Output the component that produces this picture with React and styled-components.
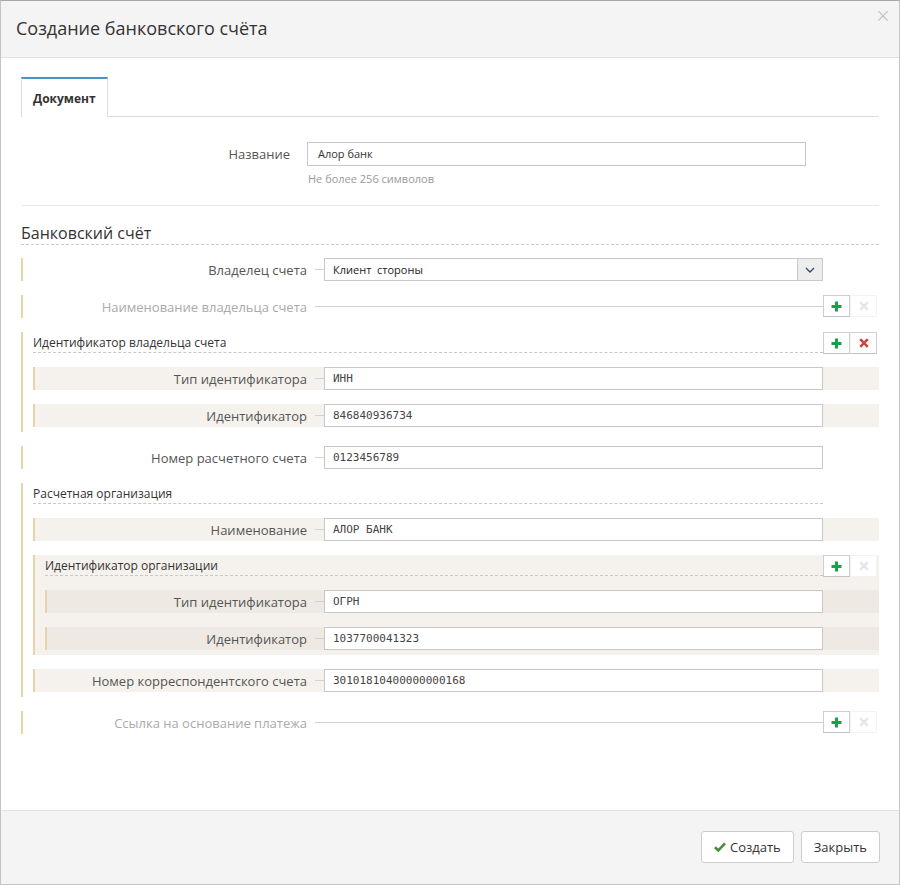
import React from "react";
import styled, { createGlobalStyle } from "styled-components";

const GOLD = "#e8d4a8";
const BEIGE = "#f5f2ed";
const BEIGE_DARK = "#eeeae3";

const GlobalStyle = createGlobalStyle`
  html, body {
    margin: 0;
    padding: 0;
    background: #fff;
  }
  body {
    font-family: "Open Sans", "Noto Sans", sans-serif;
    color: #333;
  }
  * {
    box-sizing: border-box;
  }
`;

// Icons
const PlusIcon = () => (
  <svg width="11" height="11" viewBox="0 0 11 11">
    <path d="M5.5 0.5V10.5M0.5 5.5H10.5" stroke="#17a24a" strokeWidth="3" />
  </svg>
);

const TimesIcon = ({ color }) => (
  <svg width="10" height="10" viewBox="0 0 10 10">
    <path d="M1.2 1.2L8.8 8.8M8.8 1.2L1.2 8.8" stroke={color} strokeWidth="2.6" />
  </svg>
);

const CheckIcon = () => (
  <svg width="12" height="10" viewBox="0 0 12 10">
    <path d="M1 5.2L4.3 8.4L11 1.4" stroke="#4a8a3c" strokeWidth="2.6" fill="none" />
  </svg>
);

const ChevronIcon = () => (
  <svg width="10" height="6" viewBox="0 0 10 6">
    <path d="M1 1L5 5L9 1" stroke="#34466b" strokeWidth="1.3" fill="none" />
  </svg>
);

const App = () => {
  return (
    <>
      <GlobalStyle />
      <Modal>
        <Header>
          <Title>Создание банковского счёта</Title>
          <Close>×</Close>
        </Header>
        <Body>
          <TabBar>
            <Tab>Документ</Tab>
          </TabBar>

          <NameGrid>
            <NameLabel>Название</NameLabel>
            <NameInput>Алор банк</NameInput>
            <span />
            <span />
            <Hint>Не более 256 символов</Hint>
          </NameGrid>

          <Separator />

          <SectionHeading>Банковский счёт</SectionHeading>

          <FieldList>
            <Field label="Владелец счета" select value="Клиент  стороны" />
            <EmptyField label="Наименование владельца счета" />

            <Group>
              <GroupHeader title="Идентификатор владельца счета" actions removable />
              <Field label="Тип идентификатора" value="ИНН" bg={BEIGE} />
              <Field label="Идентификатор" value="846840936734" bg={BEIGE} />
            </Group>

            <Field label="Номер расчетного счета" value="0123456789" />

            <Group>
              <GroupHeader title="Расчетная организация" />
              <Field label="Наименование" value="АЛОР БАНК" bg={BEIGE} />
              <Group $bg={BEIGE}>
                <GroupHeader title="Идентификатор организации" actions />
                <Field label="Тип идентификатора" value="ОГРН" bg={BEIGE_DARK} />
                <Field label="Идентификатор" value="1037700041323" bg={BEIGE_DARK} />
              </Group>
              <Field
                label="Номер корреспондентского счета"
                value="30101810400000000168"
                bg={BEIGE}
              />
            </Group>

            <EmptyField label="Ссылка на основание платежа" />
          </FieldList>
        </Body>
        <Footer>
          <FooterButton>
            <CheckIcon />
            Создать
          </FooterButton>
          <FooterButton>Закрыть</FooterButton>
        </Footer>
      </Modal>
    </>
  );
};

const Field = ({ label, value, select, bg }) => (
  <Row $bg={bg}>
    <FieldLabel>{label}</FieldLabel>
    <Connector />
    {select ? (
      <SelectBox>
        <SelectValue>{value}</SelectValue>
        <SelectArrow>
          <ChevronIcon />
        </SelectArrow>
      </SelectBox>
    ) : (
      <Control>{value}</Control>
    )}
    <Gutter />
  </Row>
);

const EmptyField = ({ label }) => (
  <Row>
    <FieldLabel $muted>{label}</FieldLabel>
    <Connector $stretch />
    <Gutter>
      <Actions />
    </Gutter>
  </Row>
);

const Actions = ({ removable }) => (
  <ActionGroup>
    <ActionButton>
      <PlusIcon />
    </ActionButton>
    <ActionButton $disabled={!removable}>
      <TimesIcon color={removable ? "#c9483d" : "#e6e6e6"} />
    </ActionButton>
  </ActionGroup>
);

const GroupHeader = ({ title, actions, removable }) => (
  <HeaderRow>
    <GroupTitle>{title}</GroupTitle>
    <Gutter>{actions && <Actions removable={removable} />}</Gutter>
  </HeaderRow>
);

// Styled Components
const Modal = styled.div`
  width: 900px;
  height: 885px;
  display: flex;
  flex-direction: column;
  border: 1px solid #c4c4c4;
  border-top-color: #a8a8a8;
  background: #fff;
`;

const Header = styled.div`
  height: 57px;
  display: flex;
  justify-content: space-between;
  padding: 0 8px 0 15px;
  background: #f4f4f4;
  border-bottom: 1px solid #e2e2e2;
`;

const Title = styled.h1`
  align-self: center;
  margin: 0 0 2px;
  font-size: 18px;
  font-weight: 400;
  color: #333;
`;

const Close = styled.span`
  margin-top: 3px;
  font-size: 19px;
  line-height: 22px;
  color: #bdbdbd;
  font-family: "DejaVu Sans", sans-serif;
  font-weight: 300;
`;

const Body = styled.div`
  flex: 1;
  padding: 19px 20px 0;
`;

const TabBar = styled.div`
  height: 40px;
  display: flex;
  border-bottom: 1px solid #ddd;
`;

const Tab = styled.div`
  height: 40px;
  padding: 0 11px;
  display: flex;
  align-items: center;
  font-size: 12px;
  font-weight: 700;
  color: #333;
  background: #fff;
  border: 1px solid #ddd;
  border-top: 2px solid #4a94c4;
  border-bottom: none;
`;

const NameGrid = styled.div`
  display: grid;
  grid-template-columns: 1fr 499px 73px;
  align-items: center;
  margin-top: 25px;
`;

const NameLabel = styled.div`
  padding-right: 17px;
  text-align: right;
  font-size: 13px;
  color: #555;
`;

const NameInput = styled.div`
  height: 24px;
  line-height: 22px;
  padding: 0 10px;
  border: 1px solid #c8c8c8;
  font-size: 11px;
  color: #333;
`;

const Hint = styled.div`
  margin-top: 5px;
  padding-left: 1px;
  font-size: 11px;
  line-height: 16px;
  color: #999;
`;

const Separator = styled.div`
  margin-top: 18px;
  height: 1px;
  background: #e8e8e8;
`;

const SectionHeading = styled.h2`
  margin: 16px 0 0;
  font-size: 16px;
  font-weight: 400;
  line-height: 22px;
  color: #333;
  border-bottom: 1px dashed #ccc;
`;

const FieldList = styled.div`
  margin-top: 13px;
  display: flex;
  flex-direction: column;
  gap: 14px;
`;

const Row = styled.div`
  height: 23px;
  display: flex;
  align-items: center;
  border-left: 2px solid ${GOLD};
  background: ${(p) => p.$bg || "transparent"};
`;

const FieldLabel = styled.div`
  flex: 1;
  padding-right: 8px;
  text-align: right;
  font-size: 13px;
  color: ${(p) => (p.$muted ? "#aaa" : "#555")};
  white-space: nowrap;
`;

const Connector = styled.div`
  width: ${(p) => (p.$stretch ? "508px" : "9px")};
  height: 1px;
  background: #d2d2d2;
`;

const Control = styled.div`
  width: 499px;
  height: 23px;
  padding: 0 8px;
  line-height: 21px;
  background: #fff;
  border: 1px solid #c8c8c8;
  font-family: "DejaVu Sans Mono", "Liberation Mono", monospace;
  font-size: 11px;
  color: #444;
  white-space: pre;
`;

const SelectBox = styled.div`
  width: 499px;
  height: 23px;
  display: flex;
  background: #fff;
  border: 1px solid #c8c8c8;
`;

const SelectValue = styled.div`
  flex: 1;
  padding: 0 8px;
  line-height: 21px;
  font-size: 11px;
  color: #222;
  white-space: pre;
`;

const SelectArrow = styled.div`
  width: 25px;
  display: flex;
  align-items: center;
  justify-content: center;
  background: #ededed;
  border-left: 1px solid #c8c8c8;
`;

const Gutter = styled.div`
  width: 56px;
  height: 100%;
  display: flex;
  align-items: flex-start;
`;

const ActionGroup = styled.div`
  display: flex;
`;

const ActionButton = styled.div`
  width: 27px;
  height: 22px;
  display: flex;
  align-items: center;
  justify-content: center;
  background: #fff;
  border: 1px solid ${(p) => (p.$disabled ? "#f3f3f3" : "#cfcfcf")};
  border-bottom-color: ${(p) => (p.$disabled ? "#f3f3f3" : "#c2c2c2")};
  & + & {
    border-left: ${(p) => (p.$disabled ? "1px solid #f3f3f3" : "none")};
  }
`;

const Group = styled.div`
  display: flex;
  flex-direction: column;
  gap: 14px;
  padding: 0 0 5px 10px;
  border-left: 2px solid ${GOLD};
  background: ${(p) => p.$bg || "transparent"};
`;

const HeaderRow = styled.div`
  height: 21px;
  display: flex;
`;

const GroupTitle = styled.div`
  flex: 1;
  font-size: 12px;
  line-height: 21px;
  color: #333;
  border-bottom: 1px dashed #c8c8c8;
`;

const Footer = styled.div`
  height: 74px;
  display: flex;
  justify-content: flex-end;
  align-items: flex-start;
  gap: 7px;
  padding: 20px 19px 0;
  background: #f4f4f4;
  border-top: 1px solid #e2e2e2;
`;

const FooterButton = styled.button`
  height: 32px;
  padding: 0 12px;
  display: flex;
  align-items: center;
  gap: 4px;
  background: #fff;
  border: 1px solid #cdcdcd;
  border-radius: 3px;
  font-family: "Open Sans", sans-serif;
  font-size: 13px;
  color: #333;
`;

export default App;
